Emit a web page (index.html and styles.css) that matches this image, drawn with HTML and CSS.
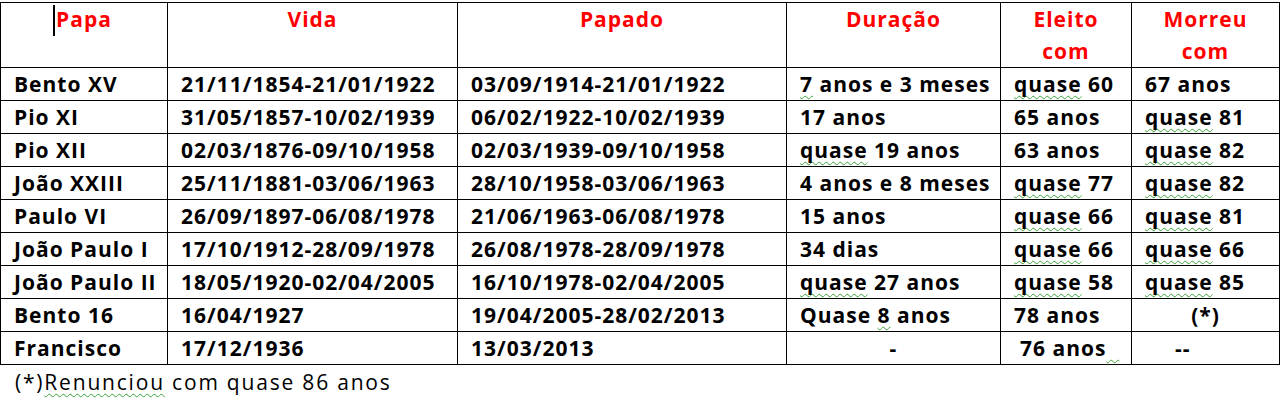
FILE: index.html
```html
<!DOCTYPE html>
<html lang="pt">
<head>
<meta charset="utf-8">
<title>Papas</title>
<link rel="stylesheet" href="styles.css">
</head>
<body>
<table class="papas">
  <colgroup>
    <col class="c1"><col class="c2"><col class="c3"><col class="c4"><col class="c5"><col class="c6">
  </colgroup>
  <thead>
    <tr>
      <th><span class="caret-wrap"><span class="caret"></span>Papa</span></th>
      <th>Vida</th>
      <th>Papado</th>
      <th>Duração</th>
      <th>Eleito<br>com</th>
      <th>Morreu<br>com</th>
    </tr>
  </thead>
  <tbody>
    <tr><td>Bento XV</td><td>21/11/1854-21/01/1922</td><td>03/09/1914-21/01/1922</td><td><span class="sq">7</span> anos e 3 meses</td><td><span class="sq">quase</span> 60</td><td>67 anos</td></tr>
    <tr><td>Pio XI</td><td>31/05/1857-10/02/1939</td><td>06/02/1922-10/02/1939</td><td>17 anos</td><td>65 anos</td><td><span class="sq">quase</span> 81</td></tr>
    <tr><td>Pio XII</td><td>02/03/1876-09/10/1958</td><td>02/03/1939-09/10/1958</td><td><span class="sq">quase</span> 19 anos</td><td>63 anos</td><td><span class="sq">quase</span> 82</td></tr>
    <tr><td>João XXIII</td><td>25/11/1881-03/06/1963</td><td>28/10/1958-03/06/1963</td><td>4 anos e 8 meses</td><td><span class="sq">quase</span> 77</td><td><span class="sq">quase</span> 82</td></tr>
    <tr><td>Paulo VI</td><td>26/09/1897-06/08/1978</td><td>21/06/1963-06/08/1978</td><td>15 anos</td><td><span class="sq">quase</span> 66</td><td><span class="sq">quase</span> 81</td></tr>
    <tr><td>João Paulo I</td><td>17/10/1912-28/09/1978</td><td>26/08/1978-28/09/1978</td><td>34 dias</td><td><span class="sq">quase</span> 66</td><td><span class="sq">quase</span> 66</td></tr>
    <tr><td>João Paulo II</td><td>18/05/1920-02/04/2005</td><td>16/10/1978-02/04/2005</td><td><span class="sq">quase</span> 27 anos</td><td><span class="sq">quase</span> 58</td><td><span class="sq">quase</span> 85</td></tr>
    <tr><td>Bento 16</td><td>16/04/1927</td><td>19/04/2005-28/02/2013</td><td>Quase <span class="sq">8</span> anos</td><td>78 anos</td><td class="center">(*)</td></tr>
    <tr><td>Francisco</td><td>17/12/1936</td><td>13/03/2013</td><td class="center">-</td><td class="ind">76 anos<span class="sq">&nbsp;&nbsp;</span></td><td class="ind2">--</td></tr>
  </tbody>
</table>
<p class="nota">(*)<span class="sq">Renunciou</span> com quase 86 anos</p>
</body>
</html>
```
FILE: styles.css
```css
html, body {
  margin: 0;
  padding: 0;
  background: #ffffff;
}
body {
  font-family: "Open Sans", "Liberation Sans", sans-serif;
  color: #000000;
}
.papas {
  border-collapse: collapse;
  table-layout: fixed;
  width: 1279px;
  margin-top: 2px;
}
.c1 { width: 167px; }
.c2 { width: 290px; }
.c3 { width: 329px; }
.c4 { width: 214px; }
.c5 { width: 131px; }
.c6 { width: 148px; }
.papas th,
.papas td {
  border: 1px solid #000000;
  padding: 0;
  font-size: 21px;
  font-weight: 700;
  letter-spacing: 1px;
  white-space: nowrap;
  overflow: hidden;
}
.papas th {
  color: #ff0000;
  text-align: center;
  vertical-align: top;
  line-height: 32px;
  height: 64px;
}
.papas td {
  text-align: left;
  line-height: 32px;
  height: 32px;
  padding-left: 13px;
  vertical-align: top;
}
.papas td.center {
  text-align: center;
  padding-left: 0;
}
.papas td.ind { padding-left: 19px; }
.papas td.ind2 { padding-left: 43px; }
.caret-wrap {
  position: relative;
}
.caret {
  position: absolute;
  left: -3px;
  top: 0;
  width: 2px;
  height: 31px;
  background: #000000;
}
.sq {
  text-decoration: underline wavy #3aa53a;
  text-decoration-thickness: 1px;
  text-underline-offset: 3px;
  text-decoration-skip-ink: none;
}
.nota {
  margin: 0;
  padding-left: 15px;
  font-size: 21px;
  font-weight: 400;
  letter-spacing: 1.8px;
  line-height: 34px;
}
```
